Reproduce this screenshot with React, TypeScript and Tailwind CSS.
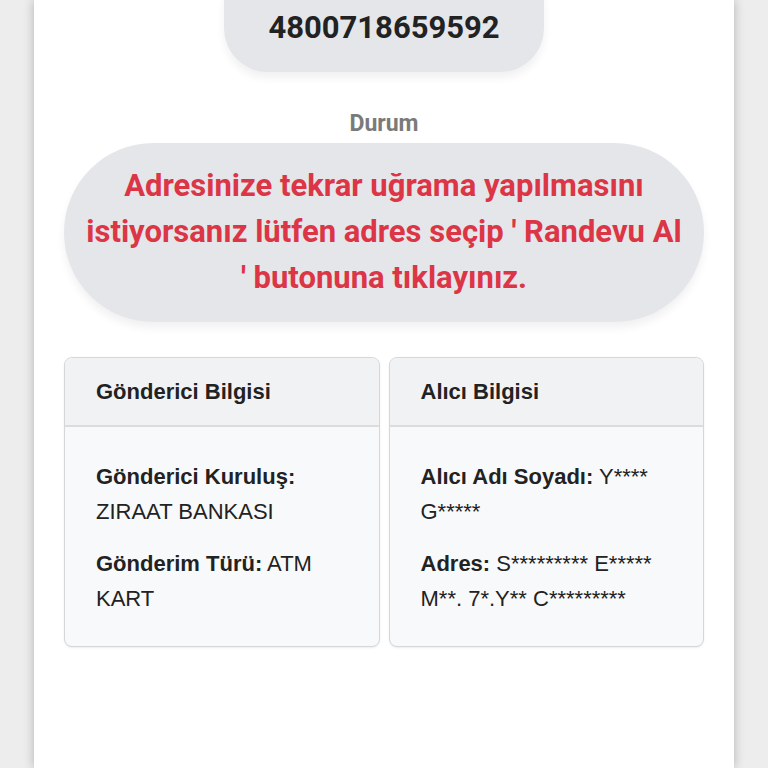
export default function App() {
  return (
    <div className="min-h-screen bg-[#ededed] flex justify-center overflow-hidden" style={{ fontFamily: "Roboto, 'Liberation Sans', sans-serif" }}>
      <div className="w-[700px] min-h-screen bg-white shadow-[0_0_10px_rgba(0,0,0,0.25)] px-[30px] flex flex-col items-center">
        <div className="mt-[-40px] w-[320px] rounded-[44px] bg-[#e5e6e9] pt-[49px] pb-[25px] text-center text-[31px] leading-[38px] font-bold text-[#222] shadow-[0_6px_8px_rgba(0,0,0,0.06)]">
          4800718659592
        </div>

        <div className="mt-[39px] text-[23px] leading-[26px] font-bold text-[#7a7a7a]">Durum</div>

        <div className="mt-[6px] w-full rounded-[90px] bg-[#e5e6e9] px-5 pt-[20px] pb-[21px] text-center text-[31px] leading-[46px] font-bold text-[#dc3545] shadow-[0_6px_8px_rgba(0,0,0,0.06)]">
          Adresinize tekrar uğrama yapılmasını istiyorsanız lütfen adres seçip ' Randevu Al ' butonuna tıklayınız.
        </div>

        <div
          className="mt-[35px] w-full grid grid-cols-2 gap-[9px] text-[22px] leading-[35px] text-[#222]"
          style={{ fontFamily: "'Liberation Sans', Arial, sans-serif" }}
        >
          <InfoCard title="Gönderici Bilgisi">
            <p>
              <span className="font-bold">Gönderici Kuruluş:</span> ZIRAAT BANKASI
            </p>
            <p className="mt-[17px]">
              <span className="font-bold">Gönderim Türü:</span> ATM KART
            </p>
          </InfoCard>
          <InfoCard title="Alıcı Bilgisi">
            <p>
              <span className="font-bold">Alıcı Adı Soyadı:</span> Y**** G*****
            </p>
            <p className="mt-[17px]">
              <span className="font-bold">Adres:</span> S********* E***** M**. 7*.Y** C*********
            </p>
          </InfoCard>
        </div>
      </div>
    </div>
  )
}

function InfoCard({ title, children }: { title: string; children: React.ReactNode }) {
  return (
    <div className="rounded-[8px] border border-[#d6d7d9] bg-[#f8f9fa] overflow-hidden shadow-[0_1px_2px_rgba(0,0,0,0.08)]">
      <div className="h-[69px] flex items-center px-[31px] bg-[#f1f2f4] border-b-2 border-[#dcdcdc] font-bold">
        {title}
      </div>
      <div className="px-[31px] pt-[32px] pb-[30px]">{children}</div>
    </div>
  )
}
